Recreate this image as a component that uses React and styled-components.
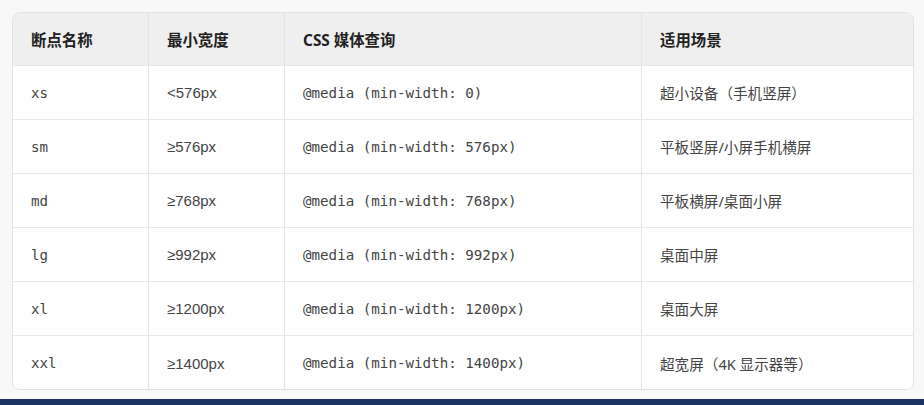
import React from "react";
import styled, { createGlobalStyle } from "styled-components";

const Global = createGlobalStyle`
  html, body { margin: 0; padding: 0; background: #f8f8f8; }
  #root { width: 924px; height: 405px; }
`;

const Page = styled.div`
  width: 924px;
  height: 405px;
  display: flex;
  flex-direction: column;
  background: #f8f8f8;
  overflow: hidden;
`;

const Content = styled.div`
  flex: 1;
  padding: 12px 10px 0 12px;
`;

const BottomBar = styled.div`
  height: 6px;
  background: #1c3262;
`;

const Table = styled.div`
  display: grid;
  grid-template-columns: 136px 136px 357px 1fr;
  grid-template-rows: 53px repeat(6, 54px);
  background: #ffffff;
  border: 1px solid #e2e2e2;
  border-radius: 8px;
  overflow: hidden;
  box-sizing: border-box;
  height: 378px;
`;

const fonts = {
  mono: '"DejaVu Sans Mono", "Liberation Mono", monospace',
  sans: '"Liberation Sans", "Noto Sans CJK SC", sans-serif',
  cjk: '"Noto Sans", "Noto Sans CJK SC", sans-serif',
};

const Cell = styled.div`
  display: flex;
  align-items: center;
  padding-left: 18px;
  box-sizing: border-box;
  border-right: ${(p) => (p.$last ? "none" : "1px solid #e4e4e4")};
  border-bottom: ${(p) => (p.$bottom ? "none" : "1px solid #e8e8e8")};
  background: ${(p) => (p.$head ? "#efefef" : "#ffffff")};
  color: ${(p) => (p.$head ? "#222222" : "#444444")};
  font-family: ${(p) => fonts[p.$kind || "cjk"]};
  font-size: ${(p) =>
    p.$head ? "15.4px" : p.$kind === "mono" ? "14.2px" : p.$kind === "sans" ? "15px" : "14.6px"};
  font-weight: ${(p) => (p.$head ? 700 : 400)};
  white-space: nowrap;
`;

const headers = ["断点名称", "最小宽度", "CSS 媒体查询", "适用场景"];
const kinds = ["mono", "sans", "mono", "cjk"];
const rows = [
  ["xs", "<576px", "@media (min-width: 0)", "超小设备（手机竖屏）"],
  ["sm", "≥576px", "@media (min-width: 576px)", "平板竖屏/小屏手机横屏"],
  ["md", "≥768px", "@media (min-width: 768px)", "平板横屏/桌面小屏"],
  ["lg", "≥992px", "@media (min-width: 992px)", "桌面中屏"],
  ["xl", "≥1200px", "@media (min-width: 1200px)", "桌面大屏"],
  ["xxl", "≥1400px", "@media (min-width: 1400px)", "超宽屏（4K 显示器等）"],
];

export default function App() {
  return (
    <Page>
      <Global />
      <Content>
        <Table>
          {headers.map((h, i) => (
            <Cell key={"h" + i} $head $last={i === 3}>
              {h}
            </Cell>
          ))}
          {rows.map((r, ri) =>
            r.map((c, ci) => (
              <Cell
                key={ri + "-" + ci}
                $kind={kinds[ci]}
                $last={ci === 3}
                $bottom={ri === rows.length - 1}
              >
                {c}
              </Cell>
            ))
          )}
        </Table>
      </Content>
      <BottomBar />
    </Page>
  );
}
